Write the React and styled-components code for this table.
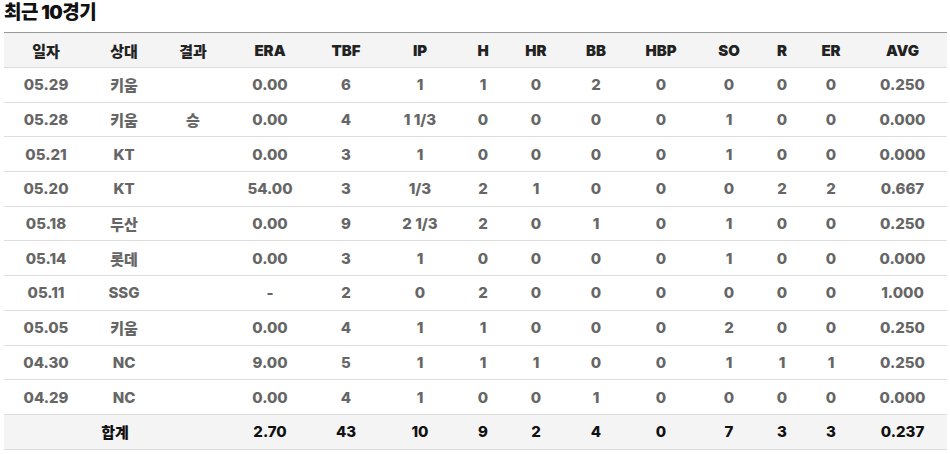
import styled, { createGlobalStyle } from "styled-components";

const GlobalStyle = createGlobalStyle`
  body {
    margin: 0;
    background: #fff;
    font-family: Inter, "Noto Sans CJK KR", sans-serif;
  }
`;

const Wrap = styled.div`
  padding: 0 3px 0 4px;
`;

const Title = styled.h3`
  margin: 0;
  height: 32px;
  font-size: 19px;
  font-weight: 900;
  color: #111;
  line-height: 26px;
  letter-spacing: -0.5px;
`;

const Table = styled.table`
  width: 943px;
  border-collapse: collapse;
  table-layout: fixed;
  border-top: 1px solid #999;
`;

const Th = styled.th`
  height: 34px;
  padding: 0;
  background: #f4f4f4;
  color: #222;
  font-size: 15px;
  font-weight: 900;
  text-align: center;
  border-bottom: 1px solid #ddd;
`;

const Td = styled.td`
  height: 33.7px;
  padding: 0;
  color: ${(p) => (p.$total ? "#111" : "#666")};
  background: ${(p) => (p.$total ? "#f4f4f4" : "#fff")};
  font-size: 15px;
  font-weight: 800;
  text-align: center;
  border-bottom: 1px solid #ddd;
`;

const widths = [84, 72, 66, 88, 64, 84, 42, 64, 56, 74, 62, 44, 54, 89];
const heads = ["일자", "상대", "결과", "ERA", "TBF", "IP", "H", "HR", "BB", "HBP", "SO", "R", "ER", "AVG"];

const rows = [
  ["05.29", "키움", "", "0.00", "6", "1", "1", "0", "2", "0", "0", "0", "0", "0.250"],
  ["05.28", "키움", "승", "0.00", "4", "1 1/3", "0", "0", "0", "0", "1", "0", "0", "0.000"],
  ["05.21", "KT", "", "0.00", "3", "1", "0", "0", "0", "0", "1", "0", "0", "0.000"],
  ["05.20", "KT", "", "54.00", "3", "1/3", "2", "1", "0", "0", "0", "2", "2", "0.667"],
  ["05.18", "두산", "", "0.00", "9", "2 1/3", "2", "0", "1", "0", "1", "0", "0", "0.250"],
  ["05.14", "롯데", "", "0.00", "3", "1", "0", "0", "0", "0", "1", "0", "0", "0.000"],
  ["05.11", "SSG", "", "-", "2", "0", "2", "0", "0", "0", "0", "0", "0", "1.000"],
  ["05.05", "키움", "", "0.00", "4", "1", "1", "0", "0", "0", "2", "0", "0", "0.250"],
  ["04.30", "NC", "", "9.00", "5", "1", "1", "1", "0", "0", "1", "1", "1", "0.250"],
  ["04.29", "NC", "", "0.00", "4", "1", "0", "0", "1", "0", "0", "0", "0", "0.000"],
];

const total = ["2.70", "43", "10", "9", "2", "4", "0", "7", "3", "3", "0.237"];

export default function App() {
  return (
    <Wrap>
      <GlobalStyle />
      <Title>최근 10경기</Title>
      <Table>
        <colgroup>
          {widths.map((w, i) => (
            <col key={i} style={{ width: w }} />
          ))}
        </colgroup>
        <thead>
          <tr>
            {heads.map((h) => (
              <Th key={h}>{h}</Th>
            ))}
          </tr>
        </thead>
        <tbody>
          {rows.map((r) => (
            <tr key={r[0]}>
              {r.map((c, i) => (
                <Td key={i}>{c}</Td>
              ))}
            </tr>
          ))}
          <tr>
            <Td $total colSpan={3}>합계</Td>
            {total.map((c, i) => (
              <Td $total key={i}>{c}</Td>
            ))}
          </tr>
        </tbody>
      </Table>
    </Wrap>
  );
}
